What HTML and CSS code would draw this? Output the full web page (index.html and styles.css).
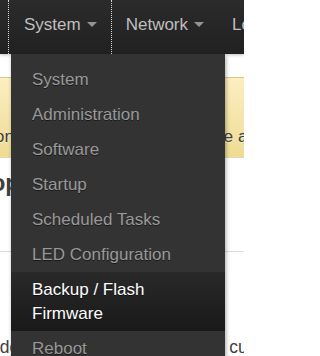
FILE: index.html
```html
<!DOCTYPE html>
<html lang="en">
<head>
<meta charset="utf-8">
<title>Backup / Flash Firmware - LuCI</title>
<link rel="stylesheet" href="styles.css">
</head>
<body>
<div class="page">
  <header class="topbar">
    <ul class="nav">
      <li class="menu">
        <a class="menu-link focus" href="#">System<span class="caret"></span></a>
        <ul class="dropdown">
          <li><a href="#">System</a></li>
          <li><a href="#">Administration</a></li>
          <li><a href="#">Software</a></li>
          <li><a href="#">Startup</a></li>
          <li><a href="#">Scheduled Tasks</a></li>
          <li><a href="#">LED Configuration</a></li>
          <li class="active"><a href="#">Backup / Flash Firmware</a></li>
          <li><a href="#">Reboot</a></li>
        </ul>
      </li>
      <li class="menu"><a class="menu-link" href="#">Network<span class="caret"></span></a></li>
      <li class="menu"><a class="menu-link" href="#">Logout</a></li>
    </ul>
  </header>
  <main class="content">
    <div class="alert">
      <h4>No password set!</h4>
      <p>There is no password set on this router. Please configure a root password to protect the web interface and enable SSH.</p>
    </div>
    <h2 class="title">Flash operations</h2>
    <h3 class="legend">Backup</h3>
    <p class="descr">Click "Generate archive" to download a tar archive of the current configuration files.</p>
  </main>
</div>
</body>
</html>
```
FILE: styles.css
```css
html, body {
  margin: 0;
  padding: 0;
  overflow: hidden;
}
body {
  background: #fff;
  font-family: "Liberation Sans", Arial, sans-serif;
  color: #404040;
}
.page {
  position: relative;
  width: 244px;
  height: 356px;
  overflow: hidden;
}
.topbar {
  position: relative;
  z-index: 10;
  height: 54px;
  padding-left: 8px;
  background: linear-gradient(#2b2b2b, #212121);
  box-shadow: 0 1px 3px rgba(0, 0, 0, 0.25);
}
.nav {
  display: flex;
  margin: 0;
  padding: 0;
  list-style: none;
  height: 54px;
  white-space: nowrap;
}
.menu {
  position: relative;
}
.menu-link {
  display: block;
  box-sizing: border-box;
  height: 54px;
  padding: 15px 14px 0 14px;
  font-size: 17px;
  line-height: 20px;
  color: #bfbfbf;
  text-decoration: none;
}
.menu-link.focus {
  padding-left: 15px;
  border-left: 1px dotted #d8d8d8;
  border-right: 1px dotted #d8d8d8;
}
.caret {
  display: inline-block;
  width: 0;
  height: 0;
  margin-left: 6px;
  border-left: 5px solid transparent;
  border-right: 5px solid transparent;
  border-top: 5px solid rgba(255, 255, 255, 0.5);
  vertical-align: 3px;
}
.dropdown {
  position: absolute;
  top: 54px;
  left: 3px;
  width: 214px;
  margin: 0;
  padding: 8px 0 6px;
  list-style: none;
  background: #333;
  box-shadow: 1px 2px 4px rgba(0, 0, 0, 0.35);
}
.dropdown a {
  display: block;
  padding: 6px 21px 5px;
  font-size: 17px;
  line-height: 24px;
  color: #999;
  text-decoration: none;
  text-shadow: 0 1px 0 rgba(0, 0, 0, 0.5);
  white-space: normal;
}
.dropdown .active a {
  background: linear-gradient(#292929, #191919);
  color: #fff;
}
.content {
  width: 900px;
  margin-left: -214px;
  padding-top: 23px;
  white-space: nowrap;
}
.alert {
  padding: 8px 0 9px 10px;
  border: 1px solid rgba(0, 0, 0, 0.09);
  border-radius: 5px;
  background: linear-gradient(#fceec1, #eedc94);
  text-shadow: 0 1px 0 rgba(255, 255, 255, 0.5);
}
.alert h4 {
  margin: 0 0 14px;
  font-size: 17px;
  line-height: 24px;
  font-weight: bold;
}
.alert p {
  margin: 0;
  font-size: 17.3px;
  line-height: 24px;
}
.title {
  margin: 7px 0 0 137px;
  font-size: 23.5px;
  line-height: 36px;
  font-weight: bold;
}
.legend {
  margin: 0;
  padding-top: 14px;
  font-size: 17px;
  line-height: 36px;
  font-weight: bold;
  border-bottom: 1px solid #ddd;
}
.descr {
  margin: 83px 0 0;
  font-size: 17.5px;
  line-height: 24px;
}
```
